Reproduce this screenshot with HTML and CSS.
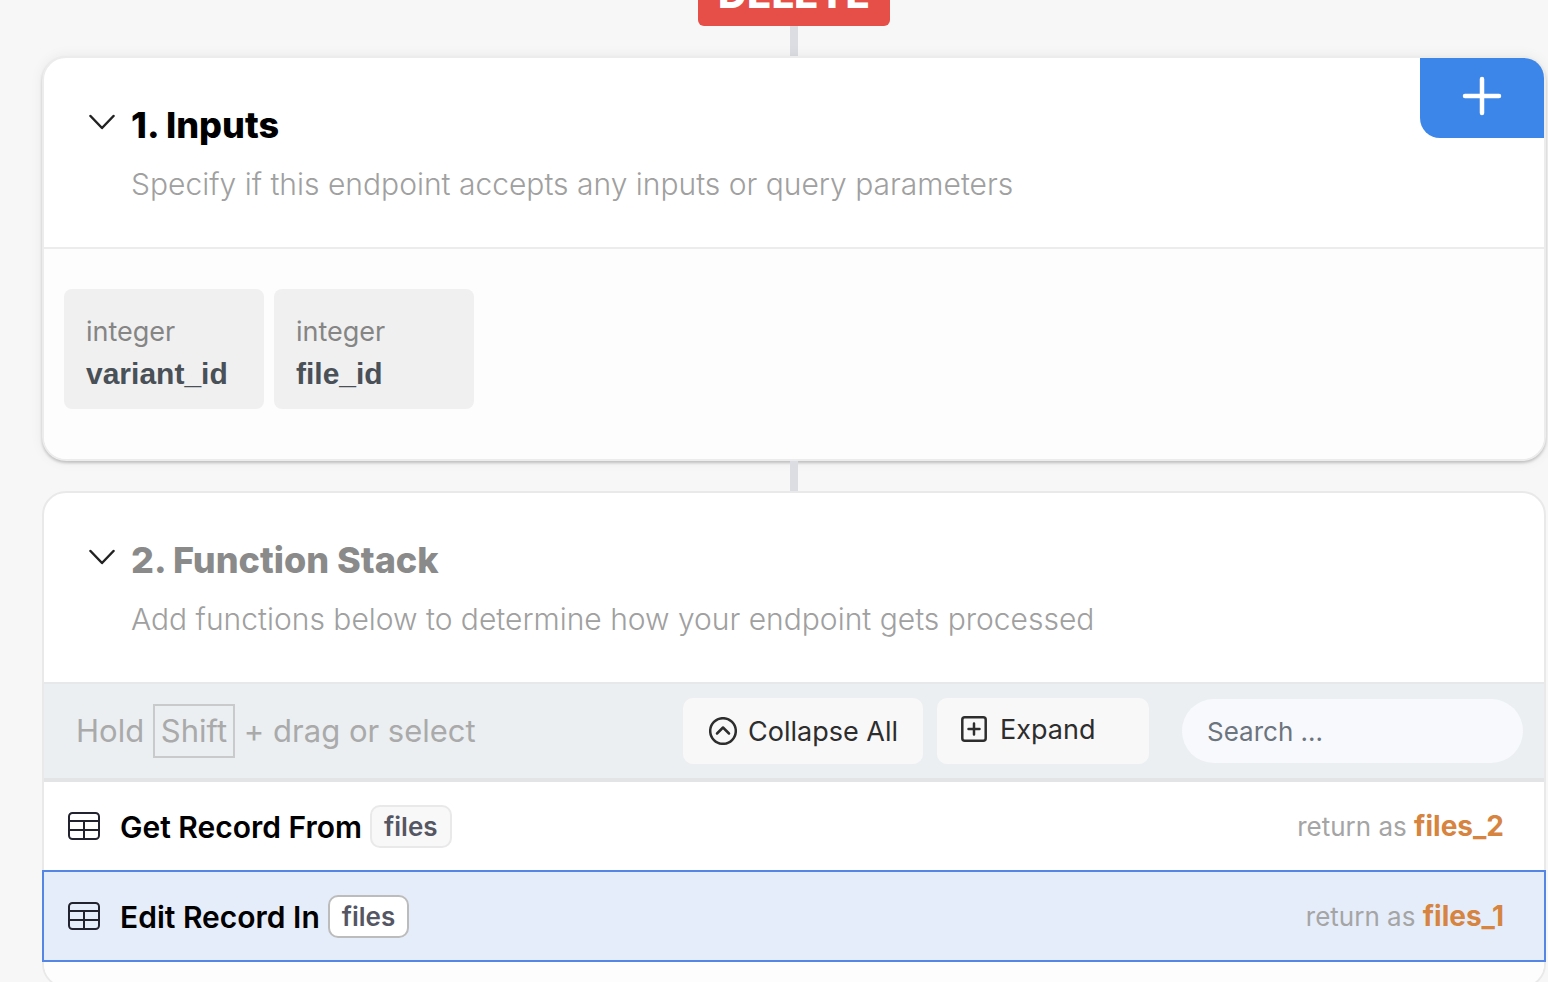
FILE: index.html
```html
<!DOCTYPE html>
<html lang="en">
<head>
    <meta charset="UTF-8">
    <title>Endpoint</title>
    <link rel="stylesheet" href="styles.css">
</head>
<body>
    <main class="flow">
        <div class="method">DELETE</div>
        <div class="connector"></div>

        <section class="card active">
            <header class="card-header">
                <button class="toggle" aria-label="Toggle inputs">
                    <svg width="26" height="16" viewBox="0 0 26 16"><path d="M1.500 2 13 14 24.500 2"/></svg>
                </button>
                <div class="heading">
                    <h2>1. Inputs</h2>
                    <p>Specify if this endpoint accepts any inputs or query parameters</p>
                </div>
                <button class="add" aria-label="Add input">
                    <svg width="40" height="40" viewBox="0 0 40 40"><path d="M20 3v34M3 20h34"/></svg>
                </button>
            </header>
            <div class="inputs">
                <div class="input-item">
                    <span class="type">integer</span>
                    <strong>variant_id</strong>
                </div>
                <div class="input-item">
                    <span class="type">integer</span>
                    <strong>file_id</strong>
                </div>
            </div>
        </section>

        <div class="connector"></div>

        <section class="card stack">
            <header class="card-header">
                <button class="toggle" aria-label="Toggle function stack">
                    <svg width="26" height="16" viewBox="0 0 26 16"><path d="M1.500 2 13 14 24.500 2"/></svg>
                </button>
                <div class="heading muted">
                    <h2>2. Function Stack</h2>
                    <p>Add functions below to determine how your endpoint gets processed</p>
                </div>
            </header>
            <div class="toolbar">
                <div class="hint">Hold <kbd>Shift</kbd> + drag or select</div>
                <button class="tool">
                    <svg width="28" height="28" viewBox="0 0 28 28"><circle cx="14" cy="14" r="12.800"/><path d="M8 16.500 14 10.500l6 6"/></svg>
                    Collapse All
                </button>
                <button class="tool expand">
                    <svg width="26" height="26" viewBox="0 0 26 26"><rect x="1.300" y="1.300" width="23.400" height="23.400" rx="2.500"/><path d="M13 7.500v11M7.500 13h11"/></svg>
                    Expand
                </button>
                <input class="search" type="text" placeholder="Search ..." aria-label="Search">
            </div>
            <div class="row">
                <svg width="32" height="28" viewBox="0 0 32 28"><rect x="1" y="1" width="30" height="26" rx="3.500"/><path d="M1 9h30M1 18h30M16 9v18"/></svg>
                <span class="name">Get Record From</span>
                <span class="tag">files</span>
                <span class="return">return as <b>files_2</b></span>
            </div>
            <div class="row selected">
                <svg width="32" height="28" viewBox="0 0 32 28"><rect x="1" y="1" width="30" height="26" rx="3.500"/><path d="M1 9h30M1 18h30M16 9v18"/></svg>
                <span class="name">Edit Record In</span>
                <span class="tag">files</span>
                <span class="return">return as <b>files_1</b></span>
            </div>
            <div class="stack-end"></div>
        </section>
    </main>
</body>
</html>
```

FILE: styles.css
```css
* {
    box-sizing: border-box;
}
body {
    margin: 0;
    background: #f7f7f7;
    font-family: Inter, sans-serif;
    color: #000;
    height: 100vh;
    overflow: hidden;
}
h2, p {
    margin: 0;
}
button {
    font-family: inherit;
    border: none;
    padding: 0;
    cursor: pointer;
}
svg {
    display: block;
    flex: none;
    fill: none;
    stroke: currentColor;
    stroke-width: 2;
    stroke-linecap: round;
    stroke-linejoin: round;
}
.flow {
    display: flex;
    flex-direction: column;
    align-items: center;
    padding: 0 2px 0 42px;
}
/* the method badge is scrolled half out of view */
.method {
    width: 192px;
    height: 56px;
    margin-top: -30px;
    border-radius: 6px;
    background: #e64f48;
    color: #fff;
    font-size: 40px;
    font-weight: 800;
    line-height: 48px;
    text-align: center;
}
.connector {
    width: 8px;
    height: 30px;
    background: #dcdde2;
}
.card {
    width: 100%;
    background: #fff;
    border: 2px solid #e9e9e9;
    border-radius: 24px;
}
.active {
    border-color: #ececec;
    box-shadow: 0 2px 3px rgba(0, 0, 0, 0.2), 0 0 14px rgba(0, 0, 0, 0.06);
}
.card-header {
    display: flex;
    position: relative;
    height: 189px;
    padding: 44px 46px 0 45px;
}
.toggle {
    align-self: flex-start;
    margin-top: 12px;
    background: none;
    color: #222;
}
.toggle svg {
    stroke-width: 2.5;
}
.heading {
    margin-left: 16px;
}
.heading h2 {
    font-size: 36px;
    font-weight: 800;
    line-height: 46px;
}
.heading p {
    margin-top: 16px;
    font-size: 30px;
    font-weight: 300;
    line-height: 40px;
    color: #a0a0a0;
}
.heading.muted h2 {
    color: #8a8a8a;
}
.add {
    position: absolute;
    top: 0;
    right: 0;
    display: flex;
    justify-content: center;
    width: 124px;
    height: 80px;
    padding-top: 18px;
    border-radius: 0 20px 0 20px;
    background: #3d86e9;
    color: #fff;
}
.add svg {
    stroke-width: 4.5;
}
.inputs {
    display: flex;
    gap: 10px;
    height: 212px;
    padding: 40px 20px;
    border-top: 2px solid #ececec;
    border-radius: 0 0 22px 22px;
    background: #fdfdfd;
}
.input-item {
    display: flex;
    flex-direction: column;
    width: 200px;
    height: 120px;
    padding: 22px;
    border-radius: 8px;
    background: #f0f0f0;
    line-height: 42px;
}
.type {
    font-size: 27px;
    color: #858585;
}
.input-item strong {
    font-family: "Liberation Sans", sans-serif;
    font-size: 30px;
    color: #495057;
}
.toolbar {
    display: flex;
    align-items: center;
    height: 100px;
    padding: 0 21px 0 32px;
    border-top: 2px solid #e6e8ea;
    border-bottom: 4px solid #e2e4e6;
    background: #ebeff2;
}
.hint {
    margin-right: auto;
    font-size: 31px;
    color: #aaa;
}
.hint kbd {
    display: inline-block;
    padding: 0 6px;
    border: 2px solid #c8cacc;
    font: inherit;
    line-height: 50px;
}
.tool {
    display: flex;
    align-items: center;
    gap: 11px;
    width: 240px;
    height: 66px;
    margin-right: 14px;
    padding-left: 26px;
    border-radius: 10px;
    background: #f8f8f8;
    color: #2d2d2d;
    font-size: 27px;
    white-space: nowrap;
}
.tool svg {
    stroke-width: 2.5;
}
.expand {
    gap: 13px;
    width: 212px;
    margin-right: 33px;
    padding: 0 0 4px 24px;
}
.search {
    width: 341px;
    height: 64px;
    padding: 0 25px;
    border: none;
    border-radius: 32px;
    background: #f8f9fd;
    font-family: inherit;
    font-size: 26px;
}
.search::placeholder {
    color: #6c757d;
    opacity: 1;
}
.row {
    display: flex;
    align-items: center;
    height: 88px;
    padding: 0 40px 0 24px;
}
.row svg {
    color: #23232f;
}
.name {
    margin: 2px 8px 0 20px;
    font-size: 30px;
    font-weight: 600;
}
.tag {
    padding: 0 12px;
    border: 2px solid #e9e9e9;
    border-radius: 10px;
    background: #f8f8f8;
    color: #555663;
    font-size: 26px;
    font-weight: 600;
    line-height: 39px;
}
.return {
    margin-left: auto;
    font-size: 26px;
    color: #a5a5a5;
}
.return b {
    font-size: 28px;
    font-weight: 700;
    color: #d6843f;
}
.selected {
    height: 92px;
    margin: 0 -2px;
    border: 2px solid #5585e5;
    background: #e6edfa;
}
.selected .tag {
    border-color: #bcbcbc;
    background: #fff;
}
.stack-end {
    height: 24px;
    border-radius: 0 0 22px 22px;
    background: #fdfdfd;
}
```
